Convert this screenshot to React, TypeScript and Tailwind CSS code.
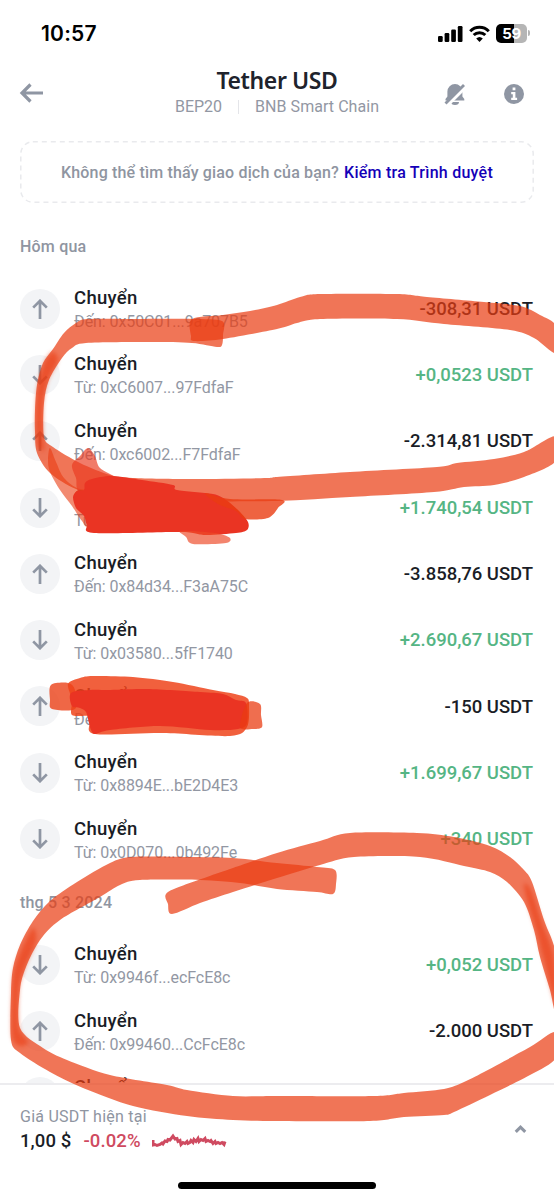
import { ChevronUp } from 'lucide-react'

type Transaction = {
  id: number
  address: string
  amount: string
  incoming: boolean
}

type Point = [number, number]

type MarkerStroke = {
  color: string
  opacity: number
  soft?: boolean
  points: Point[]
}

const yesterday: Transaction[] = [
  { id: 1, address: 'Đến: 0x50C01...9a707B5', amount: '-308,31 USDT', incoming: false },
  { id: 2, address: 'Từ: 0xC6007...97FdfaF', amount: '+0,0523 USDT', incoming: true },
  { id: 3, address: 'Đến: 0xc6002...F7FdfaF', amount: '-2.314,81 USDT', incoming: false },
  { id: 4, address: 'Từ:', amount: '+1.740,54 USDT', incoming: true },
  { id: 5, address: 'Đến: 0x84d34...F3aA75C', amount: '-3.858,76 USDT', incoming: false },
  { id: 6, address: 'Từ: 0x03580...5fF1740', amount: '+2.690,67 USDT', incoming: true },
  { id: 7, address: 'Đến:', amount: '-150 USDT', incoming: false },
  { id: 8, address: 'Từ: 0x8894E...bE2D4E3', amount: '+1.699,67 USDT', incoming: true },
  { id: 9, address: 'Từ: 0x0D070...0b492Fe', amount: '+340 USDT', incoming: true },
]

const may3: Transaction[] = [
  { id: 10, address: 'Từ: 0x9946f...ecFcE8c', amount: '+0,052 USDT', incoming: true },
  { id: 11, address: 'Đến: 0x99460...CcFcE8c', amount: '-2.000 USDT', incoming: false },
  { id: 12, address: '', amount: '', incoming: false },
]

// closed outline, rounded off at every point
const smooth = (points: Point[]) => {
  const n = points.length
  const k = 0.15
  let d = `M${points[0][0]} ${points[0][1]}`
  for (let i = 0; i < n; i++) {
    const p0 = points[(i - 1 + n) % n]
    const p1 = points[i]
    const p2 = points[(i + 1) % n]
    const p3 = points[(i + 2) % n]
    d += `C${p1[0] + (p2[0] - p0[0]) * k} ${p1[1] + (p2[1] - p0[1]) * k} ${p2[0] - (p3[0] - p1[0]) * k} ${p2[1] - (p3[1] - p1[1]) * k} ${p2[0]} ${p2[1]}`
  }
  return d + 'Z'
}

const markerStrokes: MarkerStroke[] = [
  {
    color: '#ea3c12',
    opacity: 0.71,
    points: [
      [222, 321], [192, 319], [140, 319], [88, 319], [76, 323], [64, 333], [53, 349], [43, 363], [37, 385], [35, 410], [35, 432], [37, 453], [50, 473],
      [76, 489], [110, 498], [180, 501], [277, 501], [350, 497], [434, 492], [464, 487], [494, 485], [524, 477], [556, 461], [556, 436], [524, 452],
      [494, 459], [457, 463], [437, 467], [350, 472], [277, 477], [267, 478], [193, 479], [133, 478], [110, 475], [80, 463], [53, 447], [44, 437],
      [44, 403], [49, 380], [62, 358], [72, 348], [86, 343], [150, 342], [192, 343], [217, 347], [222, 345], [223, 335],
    ],
  },
  {
    color: '#ea3c12',
    opacity: 0.71,
    points: [
      [192, 319], [223, 315], [250, 311], [277, 305], [300, 297], [320, 294], [397, 294], [427, 297], [484, 302], [520, 306], [540, 315], [556, 326],
      [556, 353], [534, 338], [510, 330], [444, 324], [397, 319], [320, 319], [297, 323], [277, 329], [223, 339], [194, 341], [191, 336],
    ],
  },
  {
    color: '#ea3c12',
    opacity: 0.6,
    soft: true,
    points: [[52, 352], [44, 364], [38, 385], [36, 410], [36, 432], [38, 447], [44, 450], [43, 437], [43, 403], [48, 380], [58, 360]],
  },
  {
    color: '#ea3c12',
    opacity: 0.6,
    points: [[50, 448], [48, 460], [50, 472], [60, 490], [72, 506], [82, 521], [92, 530], [120, 520], [110, 490], [80, 489], [64, 478], [56, 462]],
  },
  {
    color: '#ea3c22',
    opacity: 0.68,
    points: [[88, 448], [80, 456], [72, 465], [76, 478], [82, 493], [130, 490], [117, 478], [100, 468], [95, 456]],
  },
  {
    color: '#ea3423',
    opacity: 1,
    points: [
      [85, 483], [92, 479], [112, 476], [142, 480], [173, 485], [177, 490], [213, 494], [226, 500], [238, 510], [248, 522], [247, 530], [236, 533],
      [205, 535], [180, 532], [94, 533], [87, 525], [84, 516], [76, 508], [73, 497], [77, 491], [84, 490],
    ],
  },
  {
    color: '#ea3c12',
    opacity: 0.8,
    points: [[205, 493], [230, 499], [282, 500], [278, 508], [268, 518], [245, 519], [236, 511], [218, 504]],
  },
  {
    color: '#ee4a28',
    opacity: 0.68,
    points: [[180, 531], [186, 537], [193, 544], [226, 543], [230, 538], [220, 534], [205, 532]],
  },
  {
    color: '#ea3c12',
    opacity: 0.78,
    points: [[51, 685], [68, 683], [75, 690], [75, 709], [52, 709], [50, 700]],
  },
  {
    color: '#ee4218',
    opacity: 0.84,
    points: [
      [68, 684], [80, 678], [93, 676], [133, 677], [173, 682], [213, 690], [235, 694], [247, 698], [249, 705], [247, 727], [230, 736], [163, 733],
      [95, 734], [90, 722], [89, 716], [72, 715], [72, 700],
    ],
  },
  {
    color: '#ea3423',
    opacity: 1,
    points: [
      [71, 693], [90, 690], [107, 690], [147, 689], [200, 692], [223, 694], [236, 700], [246, 703], [247, 723], [238, 729], [210, 730], [160, 726],
      [110, 730], [95, 734], [91, 730], [89, 723], [86, 712], [80, 708], [72, 706],
    ],
  },
  {
    color: '#ea3c12',
    opacity: 0.74,
    points: [[247, 703], [260, 704], [261, 715], [262, 727], [253, 729], [240, 727]],
  },
  {
    color: '#ea3c12',
    opacity: 0.71,
    points: [
      [335, 870], [317, 867], [277, 863], [233, 858], [187, 857], [132, 857], [110, 863], [77, 882], [50, 901], [33, 921], [20, 945], [13, 968], [11, 993],
      [11, 1040], [20, 1053], [50, 1072], [83, 1088], [133, 1106], [187, 1116], [233, 1120], [277, 1121], [370, 1121], [404, 1117], [444, 1115],
      [454, 1112], [490, 1095], [530, 1075], [556, 1058], [556, 1032], [530, 1047], [484, 1072], [464, 1082], [444, 1089], [404, 1093], [374, 1096],
      [277, 1096], [233, 1096], [187, 1090], [167, 1085], [110, 1075], [67, 1060], [43, 1048], [20, 1028], [20, 990], [26, 967], [40, 940], [60, 920],
      [100, 897], [120, 885], [140, 880], [200, 880], [240, 883], [277, 889], [317, 892], [333, 894], [336, 884],
    ],
  },
  {
    color: '#ea3c12',
    opacity: 0.71,
    points: [
      [168, 892], [207, 877], [233, 868], [277, 853], [320, 841], [350, 833], [417, 833], [454, 837], [490, 846], [510, 857], [524, 870], [532, 882],
      [544, 920], [556, 955], [556, 1013], [550, 990], [540, 957], [534, 930], [524, 902], [507, 882], [490, 872], [464, 866], [420, 857], [354, 857], [320, 865],
      [277, 878], [233, 892], [200, 903], [172, 914], [168, 904],
    ],
  },
  {
    color: '#ea3c12',
    opacity: 0.6,
    soft: true,
    points: [[33, 928], [22, 948], [14, 970], [12, 993], [12, 1036], [20, 1046], [28, 1042], [19, 1028], [19, 990], [25, 967], [36, 941]],
  },
  {
    color: '#ea3c12',
    opacity: 0.6,
    soft: true,
    points: [[524, 884], [531, 890], [542, 922], [554, 957], [556, 1005], [543, 957], [536, 930], [528, 904]],
  },
]

function StatusBar() {
  return (
    <div className="flex h-[62px] items-center justify-between pl-[41px] pr-6 pt-1 text-black">
      <span className="font-[Inter] text-[21px] font-semibold leading-none tracking-[0.2px]">10:57</span>
      <div className="flex items-center gap-1.5">
        <svg className="h-[17px] w-[25px]" viewBox="0 0 25 17" fill="currentColor">
          <rect x="0" y="11" width="4.7" height="6" rx="1.2" />
          <rect x="6.6" y="8" width="4.7" height="9" rx="1.2" />
          <rect x="13.2" y="4.5" width="4.7" height="12.5" rx="1.2" />
          <rect x="19.8" y="1" width="4.7" height="16" rx="1.2" />
        </svg>
        <svg className="h-[17px] w-[21px]" viewBox="0 0 21 17" fill="none" stroke="currentColor" strokeWidth="3">
          <path d="M1.2 6.2a13.2 13.2 0 0 1 18.6 0" />
          <path d="M4.7 10a8.3 8.3 0 0 1 11.6 0" />
          <path d="M10.5 17 7.2 13.5a4.8 4.8 0 0 1 6.6 0z" fill="currentColor" stroke="none" />
        </svg>
        <div className="flex items-center gap-px">
          <div className="flex h-[19px] w-[31px] items-center justify-center rounded-[5px] bg-linear-to-r from-black from-58% to-[#b5b5b5] to-58%">
            <span className="font-[Inter] text-[15px] font-bold leading-none tracking-[-0.4px] text-white">59</span>
          </div>
          <div className="h-1.5 w-0.5 rounded-r-full bg-[#b5b5b5]" />
        </div>
      </div>
    </div>
  )
}

function Header() {
  return (
    <header className="flex h-[62px] items-center justify-between pl-[19px] pr-[30px]">
      <svg className="h-6 w-6 text-[#8f96a3]" viewBox="0 0 24 24" fill="none" stroke="currentColor" strokeWidth="3.2">
        <path d="M25 12H3.5M11.5 3.5 3 12l8.500 8.500" />
      </svg>
      <div className="flex flex-col items-center pl-[67px] pt-0.5">
        <h1 className="font-['Noto_Sans'] text-[23px] font-semibold leading-[25px] tracking-[-0.4px] text-[#20232c]">Tether USD</h1>
        <div className="flex items-center text-[16px] leading-[27px] text-[#9297a3]">
          <span>BEP20</span>
          <span className="mx-4 h-3.5 w-px bg-[#e4e5e9]" />
          <span className="tracking-[0.05px]">BNB Smart Chain</span>
        </div>
      </div>
      <div className="flex items-center gap-[38px] pt-0.5 text-[#8f96a3]">
        <svg className="h-[22px] w-[22px]" viewBox="0 0 22 22" fill="currentColor">
          <path d="M11 1a7.6 7.6 0 0 0-7.6 7.6v5L1.5 16v1.5h18.8V16l-1.9-2.4v-5A7.6 7.6 0 0 0 11 1zM7 19h8a4 3 0 0 1-8 0z" />
          <path d="M2.5 23 23 2.5" stroke="#fff" strokeWidth="3.6" />
          <path d="M1.5 20.5 20 2" stroke="currentColor" strokeWidth="2.8" />
        </svg>
        <svg className="h-5 w-5" viewBox="0 0 20 20">
          <circle cx="10" cy="10" r="10" fill="currentColor" />
          <path d="M8.6 3.6h2.8v2.6H8.6zM7.2 8h4.2v5.8h1.7v2.2H7.2v-2.200h1.600v-3.600H7.200z" fill="#fff" />
        </svg>
      </div>
    </header>
  )
}

function DirectionIcon({ incoming }: { incoming: boolean }) {
  return (
    <svg
      className={`h-5 w-4 text-[#8f96a3] ${incoming ? 'rotate-180' : ''}`}
      viewBox="0 0 16 20"
      fill="none"
      stroke="currentColor"
      strokeWidth="2.7"
    >
      <path d="M8 20V2M1.2 8.6 8 1.8l6.8 6.8" />
    </svg>
  )
}

function TransactionRow({ transaction }: { transaction: Transaction }) {
  const { address, amount, incoming } = transaction

  return (
    <li className="flex h-[66.3px] shrink-0 items-center">
      <div className="flex h-10 w-10 shrink-0 items-center justify-center rounded-full bg-[#f3f4f6]">
        <DirectionIcon incoming={incoming} />
      </div>
      <div className="ml-[14px] flex-1 pt-[3px]">
        <p className="text-[18.5px] font-medium leading-[23px] tracking-[0.3px] text-[#1a1d26]">Chuyển</p>
        <p className="h-[23px] text-[16px] leading-[23px] tracking-[-0.08px] text-[#9297a3]">{address}</p>
      </div>
      <span className={`pt-0.5 text-[18.5px] font-medium tracking-[-0.02px] ${incoming ? 'text-[#55b584]' : 'text-[#1a1d26]'}`}>
        {amount}
      </span>
    </li>
  )
}

function Section({ title, items }: { title: string; items: Transaction[] }) {
  return (
    <section>
      <h2 className="flex h-[59.5px] items-center pt-0.5 text-[16px] font-medium tracking-[0.2px] text-[#8f95a1]">{title}</h2>
      <ul>
        {items.map((item) => (
          <TransactionRow key={item.id} transaction={item} />
        ))}
      </ul>
    </section>
  )
}

function PriceFooter() {
  return (
    <footer className="h-[117px] shrink-0 border-t-2 border-[#ececef] bg-white">
      <div className="flex items-center justify-between pl-5 pr-6 pt-5">
        <div>
          <p className="text-[16px] leading-6 tracking-[0.25px] text-[#8f95a1]">Giá USDT hiện tại</p>
          <div className="flex items-center text-[18.5px] font-medium leading-6 text-[#1a1d26]">
            <span className="tracking-[0.1px]">1,00 $</span>
            <span className="ml-3 tracking-[0.1px] text-[#cf4a60]">-0.02%</span>
            <svg className="ml-[11px] h-4 w-[75px]" viewBox="0 0 75 16" fill="none" stroke="#cf4a60" strokeWidth="3">
              <path d="M1 7v5l2-.5 2 1 3-1 2-1.500 1 1 2-3 2 .5 1-2 2 .5 3-4 2 3 2-.5 1 3 2-1 1 4 2-2 2 1 2-2 1 2 2-1 1-2 2 2 1-3 2 2 2-3 1 3 2-2 2 1 2-2 1 3 2-1 2 1 1-1 2 3 2-2 1 2 2-1 2 1 2-1 2 2 1-3" />
            </svg>
          </div>
        </div>
        <ChevronUp className="h-[19px] w-[19px] text-[#8f96a3]" strokeWidth={3.8} strokeLinecap="butt" strokeLinejoin="miter" />
      </div>
      <div className="mx-auto mt-[29px] h-[7px] w-[198px] rounded-full bg-black" />
    </footer>
  )
}

function MarkerOverlay() {
  return (
    <svg className="pointer-events-none absolute inset-0 h-[1200px] w-[554px]" viewBox="0 0 554 1200">
      {markerStrokes.map((stroke, index) => (
        <path
          key={index}
          className={stroke.soft ? 'blur-[2px]' : 'blur-[0.5px]'}
          d={smooth(stroke.points)}
          fill={stroke.color}
          fillOpacity={stroke.opacity}
        />
      ))}
    </svg>
  )
}

export default function App() {
  return (
    <div className="relative flex h-[1200px] w-[554px] flex-col overflow-hidden bg-white font-[Roboto,sans-serif]">
      <StatusBar />
      <Header />
      <main className="min-h-0 flex-1 overflow-hidden pl-5 pr-[21px] pt-[17px]">
        <div className="relative -mr-px mb-[13px] flex h-[62px] items-center justify-center whitespace-nowrap pt-0.5 text-[16px]">
          <svg className="absolute inset-0 h-full w-full" viewBox="0 0 514 62" fill="none">
            <rect x="0.8" y="0.8" width="512.4" height="60.4" rx="12" stroke="#e9eaed" strokeWidth="1.5" strokeDasharray="5 4" />
          </svg>
          <span className="font-medium tracking-[0.16px] text-[#8f95a1]">Không thể tìm thấy giao dịch của bạn?</span>
          <a className="ml-[5px] font-medium tracking-[0.25px] text-[#1400b8]">Kiểm tra Trình duyệt</a>
        </div>
        <Section title="Hôm qua" items={yesterday} />
        <Section title="thg 5 3 2024" items={may3} />
      </main>
      <PriceFooter />
      <MarkerOverlay />
    </div>
  )
}
